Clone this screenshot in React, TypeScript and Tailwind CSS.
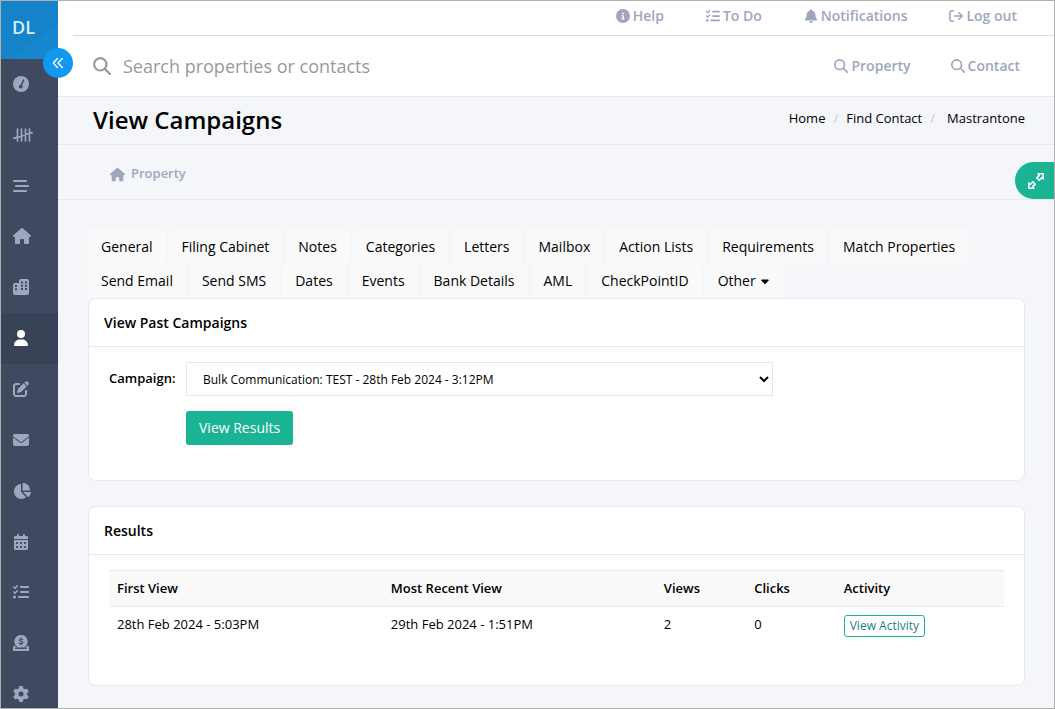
import type { ReactNode } from 'react';
import {
  FaBarsStaggered,
  FaBell,
  FaCalendarDays,
  FaCaretDown,
  FaChartPie,
  FaCircleInfo,
  FaEnvelope,
  FaGear,
  FaHouse,
  FaListCheck,
  FaPenToSquare,
  FaUser,
} from 'react-icons/fa6';

function GaugeIcon() {
  return (
    <svg viewBox="0 0 16 16" className="size-4" aria-hidden="true">
      <circle cx="8" cy="8" r="8" fill="currentColor" />
      <path d="M10.6 4.1 8.3 9.2" stroke="#3f4a60" strokeWidth="1.5" strokeLinecap="round" />
      <circle cx="7.8" cy="10.6" r="1.9" fill="#3f4a60" />
    </svg>
  );
}

function TallyIcon() {
  return (
    <svg viewBox="0 0 20 16" className="h-4 w-5" fill="none" stroke="currentColor" strokeWidth="1.7" strokeLinecap="round" aria-hidden="true">
      <path d="M4.500 2v12M8.500 2v12M12.500 2v12M16.500 2v12M.9 11.400l18.200-5.800" />
    </svg>
  );
}

function BuildingsIcon() {
  return (
    <svg viewBox="0 0 16 16" className="size-4" aria-hidden="true">
      <path d="M8 0h6a2 2 0 0 1 2 2v12a2 2 0 0 1-2 2H2a2 2 0 0 1-2-2V6a2 2 0 0 1 2-2h4V2a2 2 0 0 1 2-2Z" fill="currentColor" />
      <path d="M8 2.6h2v2H8zM12 2.6h2v2h-2zM8 5.8h2v2H8zM12 5.8h2v2h-2zM8 9h2v2H8zM12 9h2v2h-2zM2 6h2v2H2zM2 9.2h2v2H2z" fill="#3f4a60" />
    </svg>
  );
}

function CoinSlotIcon() {
  return (
    <svg viewBox="0 0 16 16" className="size-4" aria-hidden="true">
      <rect x="0" y="10.800" width="16" height="5.200" rx="1.300" fill="currentColor" />
      <circle cx="8" cy="6.500" r="7.500" fill="#3f4a60" />
      <path d="M0 13.900h16v.8a1.300 1.300 0 0 1-1.300 1.300H1.300A1.300 1.300 0 0 1 0 14.700Z" fill="currentColor" />
      <path d="M2 13.200h12" stroke="#3f4a60" strokeWidth="1.200" />
      <path d="M8 0a6.500 6.500 0 0 1 3.700 11.900q-.3.500-1 .5H5.300q-.7 0-1-.5A6.500 6.500 0 0 1 8 0Z" fill="currentColor" />
      <path d="M9.700 4.500C9 4 6.400 3.500 6.400 5.100c0 1.500 3.400.9 3.400 2.500 0 1.500-2.600 1.300-3.600.6M8 2.800v1.100M8 8.700v1.100" fill="none" stroke="#3f4a60" strokeWidth="1.200" strokeLinecap="round" />
    </svg>
  );
}

function SearchIcon({ className }: { className: string }) {
  return (
    <svg viewBox="0 0 16 16" className={className} fill="none" stroke="currentColor" strokeWidth="1.900" strokeLinecap="round" aria-hidden="true">
      <circle cx="6.500" cy="6.500" r="5.500" />
      <path d="m10.600 10.600 4.500 4.500" />
    </svg>
  );
}

function LogOutIcon() {
  return (
    <svg viewBox="0 0 16 16" className="size-3.5" fill="none" stroke="currentColor" strokeWidth="1.800" strokeLinecap="round" strokeLinejoin="round" aria-hidden="true">
      <path d="M5 2H3.300A2.300 2.300 0 0 0 1 4.300v7.400A2.300 2.300 0 0 0 3.300 14H5M6 8h9M11.400 4.300 15.100 8l-3.700 3.700" />
    </svg>
  );
}

function ExpandIcon() {
  return (
    <svg viewBox="0 0 16 16" className="size-4" fill="none" stroke="currentColor" strokeWidth="1.600" strokeLinejoin="round" aria-hidden="true">
      <path d="M10 .8h5.200V6l-1.600-1.300-2.500 2.500-2.300-2.300 2.500-2.500ZM6 15.200H.8V10l1.600 1.300 2.500-2.500 2.300 2.300-2.500 2.500Z" />
    </svg>
  );
}

function CollapseIcon() {
  return (
    <svg viewBox="0 0 12 12" className="size-3" fill="none" stroke="currentColor" strokeWidth="1.400" strokeLinecap="round" strokeLinejoin="round" aria-hidden="true">
      <path d="M5.500 1.500 1.300 6l4.200 4.500M10.300 1.500 6 6l4.300 4.500" />
    </svg>
  );
}

const sideItems: { label: string; icon: ReactNode; active?: boolean }[] = [
  { label: 'Dashboard', icon: <GaugeIcon /> },
  { label: 'Tally', icon: <TallyIcon /> },
  { label: 'Lists', icon: <FaBarsStaggered size={16} /> },
  { label: 'Properties', icon: <FaHouse size={18} /> },
  { label: 'Developments', icon: <BuildingsIcon /> },
  { label: 'Contacts', icon: <FaUser size={16} />, active: true },
  { label: 'Notes', icon: <FaPenToSquare size={16} /> },
  { label: 'Mail', icon: <FaEnvelope size={16} /> },
  { label: 'Reports', icon: <FaChartPie size={18} /> },
  { label: 'Calendar', icon: <FaCalendarDays size={16} /> },
  { label: 'Tasks', icon: <FaListCheck size={16} /> },
  { label: 'Accounts', icon: <CoinSlotIcon /> },
  { label: 'Settings', icon: <FaGear size={16} /> },
];

const tabs = [
  'General', 'Filing Cabinet', 'Notes', 'Categories', 'Letters', 'Mailbox', 'Action Lists', 'Requirements',
  'Match Properties', 'Send Email', 'Send SMS', 'Dates', 'Events', 'Bank Details', 'AML', 'CheckPointID',
];

function TopLink({ icon, children }: { icon: ReactNode; children: ReactNode }) {
  return (
    <a href="#" className="flex items-center gap-[3px] text-sm font-semibold text-[#9ea6bd]">
      {icon}
      {children}
    </a>
  );
}

function Card({ title, className, children }: { title: string; className: string; children: ReactNode }) {
  return (
    <section className={`rounded-lg border border-[#e7eaec] bg-white ${className}`}>
      <h2 className="border-b border-[#e7eaec] px-[15px] pt-3.5 pb-[13px] text-sm leading-5 font-semibold">{title}</h2>
      <div className="px-5 pt-[15px]">{children}</div>
    </section>
  );
}

export default function App() {
  return (
    <div className="flex h-screen overflow-hidden border border-[#b0b0b0] bg-[#f4f6fa] font-['Open_Sans',sans-serif] text-[13px] text-black">
      <div className="relative z-10 flex w-[57px] shrink-0">
        <aside className="w-full overflow-hidden bg-[#3f4a60]">
          <a
            href="#"
            className="flex h-[58px] items-center bg-[linear-gradient(145deg,#1583c9_0%,#1583c9_65%,#1787cd_65%,#1788ce_100%)] pb-1.5 pl-[11px] text-lg font-semibold text-[#dcecf7]"
          >
            DL
          </a>
          <ul className="grid h-[661px] grid-rows-[repeat(13,1fr)]">
            {sideItems.map((item) => (
              <li key={item.label} className={item.active ? 'bg-[#384357] text-white' : 'text-[#9ea8bd]'}>
                <a href="#" aria-label={item.label} className="flex h-full items-center pb-px pl-3">
                  {item.icon}
                </a>
              </li>
            ))}
          </ul>
        </aside>
        <button
          type="button"
          aria-label="Collapse menu"
          className="absolute top-[47px] -right-[15px] flex size-[30px] items-center justify-center rounded-full bg-[#1199f0] text-white"
        >
          <CollapseIcon />
        </button>
      </div>

      <div className="relative min-w-0 flex-1 overflow-y-auto">
        <header className="border-b border-[#e7eaec] bg-white">
          <nav className="ml-[15px] flex h-[35px] items-center justify-end gap-[42px] border-b border-[#dddddd] pr-[37px] pb-1">
            <TopLink icon={<FaCircleInfo size={14} />}>Help</TopLink>
            <TopLink icon={<FaListCheck size={14} />}>To Do</TopLink>
            <TopLink icon={<FaBell size={14} />}>Notifications</TopLink>
            <TopLink icon={<LogOutIcon />}>Log out</TopLink>
          </nav>
          <div className="flex h-[60px] items-center justify-between gap-10 pr-[34px] pl-[35px]">
            <label className="flex flex-1 items-center gap-3 text-[#999999]">
              <SearchIcon className="size-[18px] shrink-0" />
              <input
                type="text"
                aria-label="Search properties or contacts"
                placeholder="Search properties or contacts"
                className="w-full text-lg outline-none placeholder:text-[#999999]"
              />
            </label>
            <nav className="flex gap-10">
              <TopLink icon={<SearchIcon className="size-3.5" />}>Property</TopLink>
              <TopLink icon={<SearchIcon className="size-3.5" />}>Contact</TopLink>
            </nav>
          </div>
        </header>

        <div className="flex h-12 items-center justify-between border-b border-[#e7eaec] pr-[29px] pb-0.5 pl-[35px]">
          <h1 className="text-2xl font-semibold">View Campaigns</h1>
          <nav aria-label="Breadcrumb" className="pb-0.5">
            <ol className="flex">
              <li><a href="#">Home</a></li>
              <li className="px-2 text-[#cccccc]">/</li>
              <li><a href="#">Find Contact</a></li>
              <li className="pr-3 pl-2 text-[#cccccc]">/</li>
              <li>Mastrantone</li>
            </ol>
          </nav>
        </div>

        <div className="flex h-[55px] items-center border-b border-[#e7eaec] pt-1 pl-13">
          <a href="#" className="flex items-center gap-1.5 font-semibold text-[#9ea6bd]">
            <FaHouse size={15} />
            Property
          </a>
        </div>
        <button
          type="button"
          aria-label="Expand panel"
          className="absolute top-[161px] right-0 flex h-[37px] w-[39px] items-center justify-center rounded-l-full bg-[#1ab394] pr-px pl-1 text-white"
        >
          <ExpandIcon />
        </button>

        <main className="pt-[30px] pr-[29px] pl-[30px]">
          <nav className="flex flex-wrap gap-x-[3px] text-sm">
            {tabs.map((tab) => (
              <a key={tab} href="#" className="flex h-[34px] items-center rounded-sm bg-[#f9f9f9] px-[13px]">
                {tab}
              </a>
            ))}
            <button type="button" className="flex h-[34px] items-center gap-[3px] rounded-sm bg-[#f9f9f9] px-[13px]">
              Other
              <FaCaretDown size={12} />
            </button>
          </nav>

          <Card title="View Past Campaigns" className="min-h-[183px]">
            <div className="grid grid-cols-[67px_minmax(0,587px)] gap-x-2.5 gap-y-[15px]">
              <label htmlFor="campaign" className="pt-[7px] font-semibold">Campaign:</label>
              <select id="campaign" className="h-[34px] w-full border border-[#e5e6e7] bg-white pl-3 text-[12px]">
                <option>Bulk Communication: TEST - 28th Feb 2024 - 3:12PM</option>
              </select>
              <button type="button" className="col-start-2 h-[34px] justify-self-start rounded-[3px] bg-[#1ab394] px-[13px] text-sm text-white">
                View Results
              </button>
            </div>
          </Card>

          <Card title="Results" className="mt-[25px] min-h-[180px]">
            <table className="w-full table-fixed text-left">
              <colgroup>
                <col className="w-[30.6%]" />
                <col className="w-[30.5%]" />
                <col className="w-[10.1%]" />
                <col className="w-[10%]" />
                <col />
              </colgroup>
              <thead>
                <tr className="h-9 border-y border-[#e7eaec] bg-[#f9f9f9]">
                  <th className="px-2 font-semibold">First View</th>
                  <th className="px-2 font-semibold">Most Recent View</th>
                  <th className="px-2 font-semibold">Views</th>
                  <th className="px-2 font-semibold">Clicks</th>
                  <th className="px-2 font-semibold">Activity</th>
                </tr>
              </thead>
              <tbody>
                <tr className="align-top leading-[18px]">
                  <td className="px-2 pt-2">28th Feb 2024 - 5:03PM</td>
                  <td className="px-2 pt-2">29th Feb 2024 - 1:51PM</td>
                  <td className="px-2 pt-2">2</td>
                  <td className="px-2 pt-2">0</td>
                  <td className="px-2 pt-2">
                    <button type="button" className="block h-[22px] rounded-[3px] border border-[#1ab394] px-[5px] text-[12px] leading-5 text-[#197f87]">
                      View Activity
                    </button>
                  </td>
                </tr>
              </tbody>
            </table>
          </Card>
        </main>
      </div>
    </div>
  );
}
